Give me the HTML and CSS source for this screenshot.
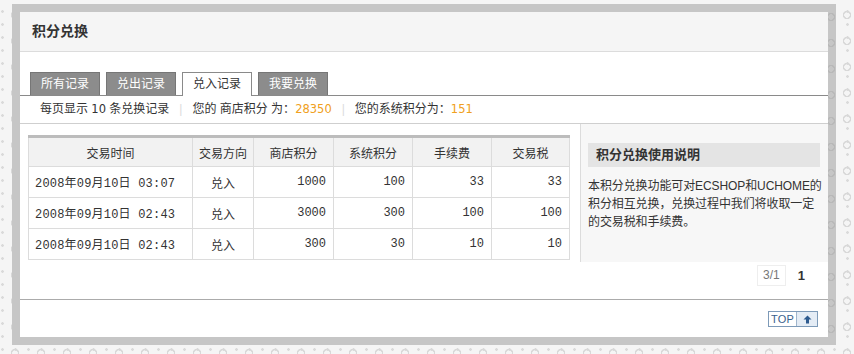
FILE: index.html
```html
<!DOCTYPE html>
<html lang="zh-CN">
<head>
<meta charset="utf-8">
<title>积分兑换</title>
<link rel="stylesheet" href="styles.css">
</head>
<body>
<div class="frame">
  <div class="panel">
    <div class="panel-head">积分兑换</div>
    <div class="tabs">
      <a class="tab">所有记录</a>
      <a class="tab">兑出记录</a>
      <a class="tab active">兑入记录</a>
      <a class="tab">我要兑换</a>
    </div>
    <div class="info">
      <span>每页显示 <b class="d">10</b> 条兑换记录</span>
      <span class="sep">|</span>
      <span>您的 商店积分 为：<em class="num">28350</em></span>
      <span class="sep">|</span>
      <span>您的系统积分为：<em class="num">151</em></span>
    </div>
    <div class="content">
      <div class="main">
        <table class="records">
          <colgroup>
            <col class="c1"><col class="c2"><col class="c3"><col class="c4"><col class="c5"><col class="c6">
          </colgroup>
          <thead>
            <tr><th>交易时间</th><th>交易方向</th><th>商店积分</th><th>系统积分</th><th>手续费</th><th>交易税</th></tr>
          </thead>
          <tbody>
            <tr><td class="time">2008年09月10日 03:07</td><td class="dir">兑入</td><td class="n">1000</td><td class="n">100</td><td class="n">33</td><td class="n">33</td></tr>
            <tr><td class="time">2008年09月10日 02:43</td><td class="dir">兑入</td><td class="n">3000</td><td class="n">300</td><td class="n">100</td><td class="n">100</td></tr>
            <tr><td class="time">2008年09月10日 02:43</td><td class="dir">兑入</td><td class="n">300</td><td class="n">30</td><td class="n">10</td><td class="n">10</td></tr>
          </tbody>
        </table>
      </div>
      <div class="side">
        <h3 class="side-title">积分兑换使用说明</h3>
        <p class="side-text">本积分兑换功能可对ECSHOP和UCHOME的积分相互兑换，兑换过程中我们将收取一定的交易税和手续费。</p>
      </div>
    </div>
    <div class="pager">
      <span class="pages">3/1</span>
      <strong class="cur">1</strong>
    </div>
    <div class="foot">
      <a class="top-btn"><span class="top-label">TOP</span><span class="top-arrow"><svg width="9" height="9" viewBox="0 0 9 9"><path d="M4.5 0.5 L8.5 4.5 L6 4.5 L6 8.5 L3 8.5 L3 4.5 L0.5 4.5 Z" fill="#2e5b8f"/></svg></span></a>
    </div>
  </div>
</div>
</body>
</html>
```
FILE: styles.css
```css
html, body {
  margin: 0;
  padding: 0;
}
body {
  width: 854px;
  height: 354px;
  overflow: hidden;
  font-family: "Liberation Sans", "Noto Sans CJK SC", sans-serif;
  font-size: 12px;
  color: #333;
  background-color: #f5f5f5;
  background-image:
    radial-gradient(circle, transparent 2.5px, #d8d8d8 3px, #d8d8d8 4px, transparent 4.5px),
    radial-gradient(circle, #dadada 1px, transparent 1.6px);
  background-size: 26px 26px, 13px 13px;
  background-position: 2px 2px, 9px 5px;
}
.frame {
  width: 808px;
  margin: 4px 0 0 12px;
  padding: 8px;
  background-color: #c6c6c6;
  background-image: radial-gradient(circle, transparent 2.5px, #b8b8b8 3px, #b8b8b8 4px, transparent 4.5px);
  background-size: 26px 26px;
}
.panel {
  background: #fff;
  height: 325px;
  display: flex;
  flex-direction: column;
}
.panel-head {
  height: 40px;
  line-height: 39px;
  background: #f5f5f5;
  border-bottom: 1px solid #dcdcdc;
  padding-left: 12px;
  font-size: 14px;
  font-weight: bold;
  color: #333;
  box-sizing: border-box;
}
.tabs {
  margin-top: 20px;
  padding-left: 10px;
  display: flex;
  gap: 6px;
  border-bottom: 1px solid #8a8a8a;
  height: 23px;
  box-sizing: content-box;
}
.tab {
  width: 70px;
  height: 23px;
  box-sizing: border-box;
  text-align: center;
  line-height: 22px;
  color: #fff;
  background: #8c8c8c;
  border: 1px solid #767676;
  border-bottom: none;
  font-size: 12px;
}
.tab.active {
  background: #fff;
  color: #333;
  border-color: #8a8a8a;
  height: 24px;
  margin-bottom: -1px;
}
.info {
  height: 27px;
  line-height: 27px;
  border-bottom: 1px solid #cfcfcf;
  padding-left: 20px;
  display: flex;
  color: #333;
}
.info .d {
  font-weight: normal;
  font-family: "DejaVu Sans", sans-serif;
  font-size: 11.5px;
}
.info .sep {
  color: #dcdcdc;
  margin: 0 10px 0 10px;
}
.num {
  font-style: normal;
  font-family: "DejaVu Sans", sans-serif;
  font-size: 11.5px;
  color: #f0a020;
}
.content {
  display: flex;
  height: 138px;
}
.main {
  width: 560px;
  padding: 11px 0 0 8px;
  box-sizing: border-box;
}
.records {
  border-collapse: collapse;
  table-layout: fixed;
  width: 541px;
  border-top: 3px solid #bcbcbc;
}
.c1 { width: 164px; }
.c2 { width: 61px; }
.c3 { width: 80px; }
.c4 { width: 79px; }
.c5 { width: 79px; }
.c6 { width: 78px; }
.records th {
  height: 30px;
  padding: 0;
  background: #f2f2f2;
  font-weight: normal;
  color: #333;
  text-align: center;
  border-left: 1px solid #dcdcdc;
  border-right: 1px solid #dcdcdc;
  border-bottom: 1px solid #dcdcdc;
  box-sizing: border-box;
}
.records td {
  height: 31px;
  padding: 0;
  border: 1px solid #dcdcdc;
  font-family: "Liberation Mono", "Noto Sans CJK SC", monospace;
  font-size: 12px;
  color: #333;
  box-sizing: border-box;
}
.records td.time {
  padding-left: 6px;
  white-space: nowrap;
  letter-spacing: 0.2px;
}
.records td.dir {
  text-align: center;
  font-family: "Liberation Sans", "Noto Sans CJK SC", sans-serif;
}
.records td.n {
  text-align: right;
  padding-right: 7px;
}
.side {
  width: 248px;
  border-left: 1px solid #dcdcdc;
  background: #f7f7f7;
  padding: 19px 8px 0 7px;
  box-sizing: border-box;
}
.side-title {
  margin: 0;
  height: 24px;
  line-height: 24px;
  background: #e4e4e4;
  padding-left: 8px;
  font-size: 13px;
  font-weight: bold;
  color: #333;
}
.side-text {
  margin: 10px -5px 0 0;
  line-height: 18px;
  color: #333;
  font-size: 12px;
  letter-spacing: -0.1px;
}
.pager {
  height: 38px;
  display: flex;
  align-items: flex-start;
  justify-content: flex-end;
  padding: 3px 23px 0 0;
  box-sizing: border-box;
  border-bottom: 1px solid #ababab;
}
.pages {
  display: inline-block;
  height: 19px;
  line-height: 19px;
  padding: 0 5px;
  border: 1px solid #eeeeee;
  color: #777;
}
.cur {
  margin-left: 12px;
  line-height: 21px;
  font-size: 13px;
  color: #333;
}
.foot {
  display: flex;
  justify-content: flex-end;
  padding: 11px 10px 0 0;
}
.top-btn {
  display: flex;
  height: 16px;
  border: 1px solid #7d9ab8;
  box-sizing: border-box;
  background: #fff;
}
.top-label {
  width: 27px;
  text-align: center;
  line-height: 14px;
  color: #3a5f8e;
  font-size: 11px;
  letter-spacing: 0.2px;
}
.top-arrow {
  width: 20px;
  border-left: 1px solid #9fb5cc;
  background: #e4ecf5;
  display: flex;
  align-items: center;
  justify-content: center;
}
```
